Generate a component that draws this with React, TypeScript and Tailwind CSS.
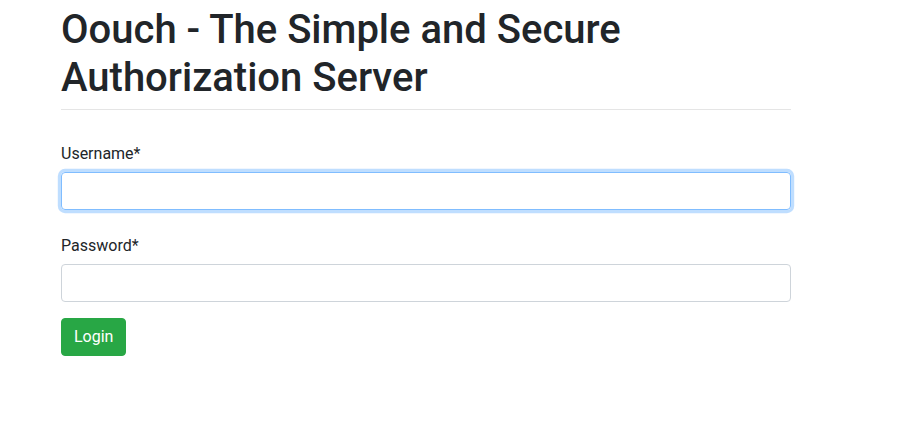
export default function App() {
  return (
    <div className="min-h-screen bg-white text-[#212529]" style={{ fontFamily: "Roboto, 'Liberation Sans', sans-serif" }}>
      <div className="ml-[61px] w-[730px] pt-[6px]">
        <h1 className="text-[40px] leading-[48px] font-medium">Oouch - The Simple and Secure Authorization Server</h1>
        <hr className="mt-[7px] border-0 border-t border-[rgba(0,0,0,0.1)]" />
        <form className="mt-[32px]">
          <label className="block text-base leading-6">Username*</label>
          <input
            type="text"
            className="mt-[6px] block w-full h-[38px] rounded border border-[#80bdff] px-3 shadow-[0_0_0_3.2px_rgba(0,123,255,0.25)] outline-none"
          />
          <label className="mt-[24px] block text-base leading-6">Password*</label>
          <input
            type="password"
            className="mt-[6px] block w-full h-[38px] rounded border border-[#ced4da] px-3 outline-none"
          />
          <button type="button" className="mt-4 h-[38px] rounded border border-[#28a745] bg-[#28a745] px-3 text-base text-white">
            Login
          </button>
        </form>
      </div>
    </div>
  );
}
